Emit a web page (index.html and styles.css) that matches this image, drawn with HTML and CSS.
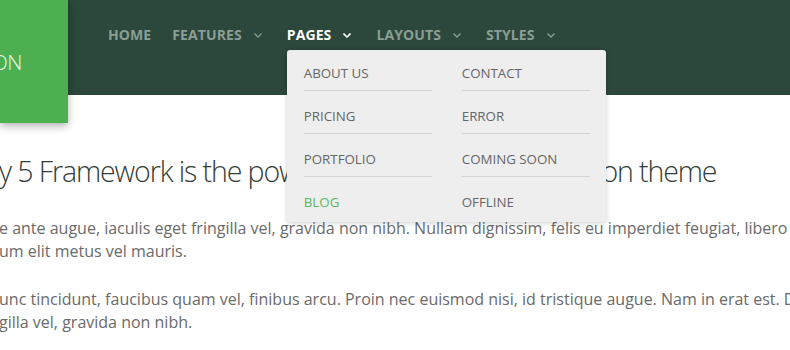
FILE: index.html
```html
<!DOCTYPE html>
<html lang="en">
<head>
    <meta charset="UTF-8">
    <meta name="viewport" content="width=device-width, initial-scale=1.0">
    <title>Pages Menu</title>
    <link rel="stylesheet" href="styles.css">
</head>
<body>
    <header class="header">
        <div class="logo"><span class="logo-text">ON</span></div>

        <nav class="nav">
            <ul class="menu">
                <li class="menu-item"><a href="#">Home</a></li>
                <li class="menu-item">
                    <a href="#">Features</a>
                    <svg class="chevron" width="8" height="5" viewBox="0 0 8 5" fill="none" stroke="currentColor" stroke-width="1.3">
                        <polyline points="0.5,0.5 4,4 7.5,0.5"/>
                    </svg>
                </li>
                <li class="menu-item active">
                    <a href="#">Pages</a>
                    <svg class="chevron" width="8" height="5" viewBox="0 0 8 5" fill="none" stroke="currentColor" stroke-width="1.6">
                        <polyline points="0.5,0.5 4,4 7.5,0.5"/>
                    </svg>

                    <!-- Pages dropdown -->
                    <div class="dropdown">
                        <ul class="dropdown-col">
                            <li><a href="#">About Us</a></li>
                            <li><a href="#">Pricing</a></li>
                            <li><a href="#">Portfolio</a></li>
                            <li><a href="#" class="current">Blog</a></li>
                        </ul>
                        <ul class="dropdown-col">
                            <li><a href="#">Contact</a></li>
                            <li><a href="#">Error</a></li>
                            <li><a href="#">Coming Soon</a></li>
                            <li><a href="#">Offline</a></li>
                        </ul>
                    </div>
                </li>
                <li class="menu-item">
                    <a href="#">Layouts</a>
                    <svg class="chevron" width="8" height="5" viewBox="0 0 8 5" fill="none" stroke="currentColor" stroke-width="1.3">
                        <polyline points="0.5,0.5 4,4 7.5,0.5"/>
                    </svg>
                </li>
                <li class="menu-item">
                    <a href="#">Styles</a>
                    <svg class="chevron" width="8" height="5" viewBox="0 0 8 5" fill="none" stroke="currentColor" stroke-width="1.3">
                        <polyline points="0.5,0.5 4,4 7.5,0.5"/>
                    </svg>
                </li>
            </ul>
        </nav>
    </header>

    <main class="content">
        <h1 class="title">y 5 Framework is the powerful, robust next generation theme</h1>
        <p class="text">e ante augue, iaculis eget fringilla vel, gravida non nibh. Nullam dignissim, felis eu imperdiet feugiat, libero<br>um elit metus vel mauris.</p>
        <p class="text">unc tincidunt, faucibus quam vel, finibus arcu. Proin nec euismod nisi, id tristique augue. Nam in erat est. D<br>gilla vel, gravida non nibh.</p>
    </main>
</body>
</html>
```

FILE: styles.css
```css
* {
    margin: 0;
    padding: 0;
    box-sizing: border-box;
}

body {
    background: #ffffff;
    font-family: 'Open Sans', 'Liberation Sans', sans-serif;
    overflow: hidden;
    width: 790px;
    height: 350px;
}

a {
    text-decoration: none;
    color: inherit;
}

ul {
    list-style: none;
}

/* Header */
.header {
    height: 95px;
    background: #2c473c;
    display: flex;
    align-items: flex-start;
    position: relative;
    z-index: 2;
}

.logo {
    width: 68px;
    height: 123px;
    background: #4caf50;
    box-shadow: 0 3px 8px rgba(0, 0, 0, 0.3);
    display: flex;
    align-items: center;
    justify-content: flex-end;
    padding-right: 46px;
    overflow: hidden;
    flex-shrink: 0;
}

.logo-text {
    color: #e8f5e9;
    font-size: 21px;
    font-weight: 300;
    letter-spacing: -0.5px;
}

.nav {
    padding-left: 40px;
}

.menu {
    display: flex;
    gap: 21px;
    height: 68px;
    align-items: center;
}

.menu-item {
    position: relative;
    display: flex;
    align-items: center;
    gap: 12px;
    color: #8a9e94;
    font-size: 14px;
    font-weight: 700;
    text-transform: uppercase;
    letter-spacing: 0.1px;
}

.menu-item.active {
    color: #ffffff;
}

.chevron {
    display: block;
    margin-top: 2px;
    margin-right: 4px;
}

/* Dropdown */
.dropdown {
    position: absolute;
    top: 25px;
    left: 0;
    width: 319px;
    background: #eeeeee;
    border-radius: 3px;
    box-shadow: 0 1px 5px rgba(0, 0, 0, 0.2);
    display: flex;
    gap: 30px;
    padding: 0 16px 3px 17px;
    text-transform: uppercase;
    font-weight: 400;
    font-size: 13.3px;
    letter-spacing: 0;
}

.dropdown-col {
    width: 128px;
}

.dropdown-col li a {
    display: block;
    color: #666666;
    line-height: 19px;
    padding: 16px 0 7px;
    border-bottom: 1px solid #d3d3d3;
}

.dropdown-col li:first-child a {
    padding-top: 14px;
}

.dropdown-col li:last-child a {
    border-bottom: none;
    padding-bottom: 7px;
}

.dropdown-col a.current {
    color: #5cb85c;
}

/* Content */
.content {
    margin-left: -1px;
    padding-top: 56px;
    white-space: nowrap;
}

.title {
    font-size: 28.5px;
    font-weight: 300;
    color: #333d38;
    letter-spacing: -1.1px;
    line-height: 40px;
    margin-bottom: 26px;
}

.text {
    font-size: 16px;
    color: #6a6a6a;
    line-height: 23px;
    margin-bottom: 25px;
}
```
